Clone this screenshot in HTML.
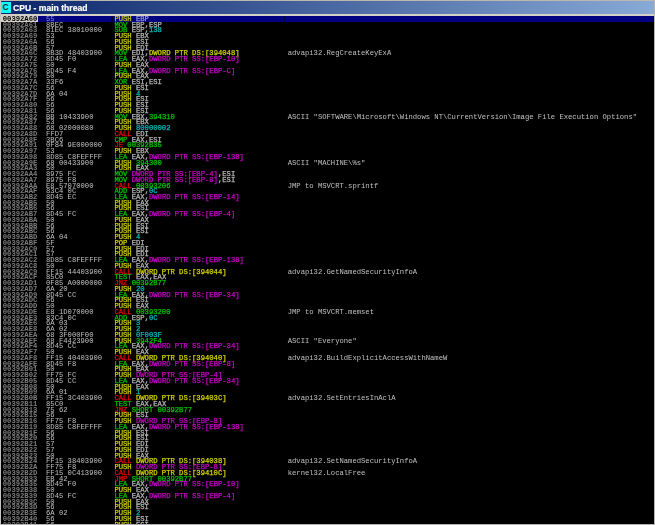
<!DOCTYPE html>
<html><head><meta charset="utf-8"><style>
html,body{margin:0;padding:0;}
body{width:655px;height:525px;position:relative;overflow:hidden;background:#d4d0c8;}
#win{position:absolute;left:0;top:0;width:655px;height:525px;background:#d4d0c8;}
#tb{position:absolute;left:0;top:0;width:655px;height:1px;background:#bcb8b0;}
#bb{position:absolute;left:0;top:523.7px;width:655px;height:1.3px;background:#b4b4b4;}
#lb{position:absolute;left:0;top:0;width:1px;height:525px;background:#c4c4c4;}
#rb{position:absolute;left:654px;top:0;width:1px;height:525px;background:#b4b4b4;}
#title{position:absolute;left:1px;top:1px;width:653px;height:12.8px;background:linear-gradient(to right,#0a246a 0px,#a6caf0 810px);}
#icon{position:absolute;left:1px;top:1.8px;width:10.4px;height:11px;background:#10f8f8;}
#icon span{position:absolute;left:1.6px;top:1.2px;font:bold 8.6px/9px "Liberation Sans",sans-serif;color:#142a2a;}
#ttl{position:absolute;left:12.6px;top:2.6px;font:bold 8.6px "Liberation Sans",sans-serif;color:#fff;white-space:nowrap;line-height:11px;-webkit-text-stroke:0.2px #fff;letter-spacing:0px;will-change:transform;}
#body{position:absolute;left:1px;top:15.8px;width:653px;height:507.9px;background:#000;overflow:hidden;}
#rows{position:absolute;left:0;top:0;width:655px;height:525px;overflow:hidden;will-change:transform;filter:none;clip-path:inset(15.8px 1px 1.3px 1px);}
.row{position:absolute;left:0;width:655px;height:5.747px;font-family:"Liberation Mono",monospace;font-size:7.2px;line-height:5.747px;white-space:pre;letter-spacing:0.0px;font-weight:normal;}
.row span{position:absolute;top:1.05px;}
.row b{font-weight:inherit;}
.a{left:2.75px;color:#7c7c7c;font-weight:bold;}
.h{left:46.0px;color:#c0c0c0;font-weight:normal;}
.dd{left:114.4px;font-weight:normal;-webkit-text-stroke:0.25px;}
.cm{left:287.7px;color:#c0c0c0;font-weight:normal;}
.y{color:#d0d000;} .g{color:#00c400;} .red{color:#f00000;} .r{color:#b8b8b8;}
.c{color:#00b8b8;} .m{color:#c800c8;} .d{color:#d0d000;}
.selbg{position:absolute;top:15.8px;height:5.9px;background:#000080;}
.abox{position:absolute;left:1.2px;top:15.8px;width:37px;height:5.9px;background:#d4d0c8;}
.sel .a{color:#000;}
.sel .r{color:#9a9ae0;} .sel .h{color:#9090e0;}
.sep{position:absolute;top:15.8px;height:5.9px;width:1px;background:#000030;}
</style></head><body>
<div id="win">
<div id="tb"></div><div id="bb"></div><div id="lb"></div><div id="rb"></div>
<div id="title"></div>
<div id="icon"><span>C</span></div>
<div id="ttl">CPU - main thread</div>
<div id="body"></div>
<div class="abox"></div>
<div class="selbg" style="left:38.4px;width:615.6px;background:#000038"></div>
<div class="selbg" style="left:38.4px;width:73.1px"></div>
<div class="selbg" style="left:112.6px;width:171.3px"></div>
<div class="selbg" style="left:284.9px;width:369.1px"></div>
<div id="rows">
<div class="row sel" style="top:15.800px"><span class="a">00392A60</span><span class="h">55</span><span class="dd"><b class="y">PUSH</b> <b class="r">EBP</b></span></div>
<div class="row" style="top:21.547px"><span class="a">00392A61</span><span class="h">8BEC</span><span class="dd"><b class="g">MOV</b> <b class="r">EBP</b><b class="r">,</b><b class="r">ESP</b></span></div>
<div class="row" style="top:27.294px"><span class="a">00392A63</span><span class="h">81EC 38010000</span><span class="dd"><b class="g">SUB</b> <b class="r">ESP</b><b class="r">,</b><b class="c">138</b></span></div>
<div class="row" style="top:33.041px"><span class="a">00392A69</span><span class="h">53</span><span class="dd"><b class="y">PUSH</b> <b class="r">EBX</b></span></div>
<div class="row" style="top:38.788px"><span class="a">00392A6A</span><span class="h">56</span><span class="dd"><b class="y">PUSH</b> <b class="r">ESI</b></span></div>
<div class="row" style="top:44.535px"><span class="a">00392A6B</span><span class="h">57</span><span class="dd"><b class="y">PUSH</b> <b class="r">EDI</b></span></div>
<div class="row" style="top:50.282px"><span class="a">00392A6C</span><span class="h">8B3D 48403900</span><span class="dd"><b class="g">MOV</b> <b class="r">EDI</b><b class="r">,</b><b class="d">DWORD PTR DS:[394048]</b></span><span class="cm">advapi32.RegCreateKeyExA</span></div>
<div class="row" style="top:56.029px"><span class="a">00392A72</span><span class="h">8D45 F0</span><span class="dd"><b class="g">LEA</b> <b class="r">EAX</b><b class="r">,</b><b class="m">DWORD PTR SS:[EBP-10]</b></span></div>
<div class="row" style="top:61.776px"><span class="a">00392A75</span><span class="h">50</span><span class="dd"><b class="y">PUSH</b> <b class="r">EAX</b></span></div>
<div class="row" style="top:67.523px"><span class="a">00392A76</span><span class="h">8D45 F4</span><span class="dd"><b class="g">LEA</b> <b class="r">EAX</b><b class="r">,</b><b class="m">DWORD PTR SS:[EBP-C]</b></span></div>
<div class="row" style="top:73.270px"><span class="a">00392A79</span><span class="h">50</span><span class="dd"><b class="y">PUSH</b> <b class="r">EAX</b></span></div>
<div class="row" style="top:79.017px"><span class="a">00392A7A</span><span class="h">33F6</span><span class="dd"><b class="g">XOR</b> <b class="r">ESI</b><b class="r">,</b><b class="r">ESI</b></span></div>
<div class="row" style="top:84.764px"><span class="a">00392A7C</span><span class="h">56</span><span class="dd"><b class="y">PUSH</b> <b class="r">ESI</b></span></div>
<div class="row" style="top:90.511px"><span class="a">00392A7D</span><span class="h">6A 04</span><span class="dd"><b class="y">PUSH</b> <b class="c">4</b></span></div>
<div class="row" style="top:96.258px"><span class="a">00392A7F</span><span class="h">56</span><span class="dd"><b class="y">PUSH</b> <b class="r">ESI</b></span></div>
<div class="row" style="top:102.005px"><span class="a">00392A80</span><span class="h">56</span><span class="dd"><b class="y">PUSH</b> <b class="r">ESI</b></span></div>
<div class="row" style="top:107.752px"><span class="a">00392A81</span><span class="h">56</span><span class="dd"><b class="y">PUSH</b> <b class="r">ESI</b></span></div>
<div class="row" style="top:113.499px"><span class="a">00392A82</span><span class="h">BB 10433900</span><span class="dd"><b class="g">MOV</b> <b class="r">EBX</b><b class="r">,</b><b class="g">394310</b></span><span class="cm">ASCII &quot;SOFTWARE\Microsoft\Windows NT\CurrentVersion\Image File Execution Options&quot;</span></div>
<div class="row" style="top:119.246px"><span class="a">00392A87</span><span class="h">53</span><span class="dd"><b class="y">PUSH</b> <b class="r">EBX</b></span></div>
<div class="row" style="top:124.993px"><span class="a">00392A88</span><span class="h">68 02000080</span><span class="dd"><b class="y">PUSH</b> <b class="c">80000002</b></span></div>
<div class="row" style="top:130.740px"><span class="a">00392A8D</span><span class="h">FFD7</span><span class="dd"><b class="red">CALL</b> <b class="r">EDI</b></span></div>
<div class="row" style="top:136.487px"><span class="a">00392A8F</span><span class="h">3BC6</span><span class="dd"><b class="g">CMP</b> <b class="r">EAX</b><b class="r">,</b><b class="r">ESI</b></span></div>
<div class="row" style="top:142.234px"><span class="a">00392A91</span><span class="h">0F84 9E000000</span><span class="dd"><b class="red">JE</b> <b class="g">00392B35</b></span></div>
<div class="row" style="top:147.981px"><span class="a">00392A97</span><span class="h">53</span><span class="dd"><b class="y">PUSH</b> <b class="r">EBX</b></span></div>
<div class="row" style="top:153.728px"><span class="a">00392A98</span><span class="h">8D85 C8FEFFFF</span><span class="dd"><b class="g">LEA</b> <b class="r">EAX</b><b class="r">,</b><b class="m">DWORD PTR SS:[EBP-138]</b></span></div>
<div class="row" style="top:159.475px"><span class="a">00392A9E</span><span class="h">68 00433900</span><span class="dd"><b class="y">PUSH</b> <b class="g">394300</b></span><span class="cm">ASCII &quot;MACHINE\%s&quot;</span></div>
<div class="row" style="top:165.222px"><span class="a">00392AA3</span><span class="h">50</span><span class="dd"><b class="y">PUSH</b> <b class="r">EAX</b></span></div>
<div class="row" style="top:170.969px"><span class="a">00392AA4</span><span class="h">8975 FC</span><span class="dd"><b class="g">MOV</b> <b class="m">DWORD PTR SS:[EBP-4]</b><b class="r">,</b><b class="r">ESI</b></span></div>
<div class="row" style="top:176.716px"><span class="a">00392AA7</span><span class="h">8975 F8</span><span class="dd"><b class="g">MOV</b> <b class="m">DWORD PTR SS:[EBP-8]</b><b class="r">,</b><b class="r">ESI</b></span></div>
<div class="row" style="top:182.463px"><span class="a">00392AAA</span><span class="h">E8 57070000</span><span class="dd"><b class="red">CALL</b> <b class="g">00393206</b></span><span class="cm">JMP to MSVCRT.sprintf</span></div>
<div class="row" style="top:188.210px"><span class="a">00392AAF</span><span class="h">83C4 0C</span><span class="dd"><b class="g">ADD</b> <b class="r">ESP</b><b class="r">,</b><b class="c">0C</b></span></div>
<div class="row" style="top:193.957px"><span class="a">00392AB2</span><span class="h">8D45 EC</span><span class="dd"><b class="g">LEA</b> <b class="r">EAX</b><b class="r">,</b><b class="m">DWORD PTR SS:[EBP-14]</b></span></div>
<div class="row" style="top:199.704px"><span class="a">00392AB5</span><span class="h">50</span><span class="dd"><b class="y">PUSH</b> <b class="r">EAX</b></span></div>
<div class="row" style="top:205.451px"><span class="a">00392AB6</span><span class="h">56</span><span class="dd"><b class="y">PUSH</b> <b class="r">ESI</b></span></div>
<div class="row" style="top:211.198px"><span class="a">00392AB7</span><span class="h">8D45 FC</span><span class="dd"><b class="g">LEA</b> <b class="r">EAX</b><b class="r">,</b><b class="m">DWORD PTR SS:[EBP-4]</b></span></div>
<div class="row" style="top:216.945px"><span class="a">00392ABA</span><span class="h">50</span><span class="dd"><b class="y">PUSH</b> <b class="r">EAX</b></span></div>
<div class="row" style="top:222.692px"><span class="a">00392ABB</span><span class="h">56</span><span class="dd"><b class="y">PUSH</b> <b class="r">ESI</b></span></div>
<div class="row" style="top:228.439px"><span class="a">00392ABC</span><span class="h">56</span><span class="dd"><b class="y">PUSH</b> <b class="r">ESI</b></span></div>
<div class="row" style="top:234.186px"><span class="a">00392ABD</span><span class="h">6A 04</span><span class="dd"><b class="y">PUSH</b> <b class="c">4</b></span></div>
<div class="row" style="top:239.933px"><span class="a">00392ABF</span><span class="h">5F</span><span class="dd"><b class="y">POP</b> <b class="r">EDI</b></span></div>
<div class="row" style="top:245.680px"><span class="a">00392AC0</span><span class="h">57</span><span class="dd"><b class="y">PUSH</b> <b class="r">EDI</b></span></div>
<div class="row" style="top:251.427px"><span class="a">00392AC1</span><span class="h">57</span><span class="dd"><b class="y">PUSH</b> <b class="r">EDI</b></span></div>
<div class="row" style="top:257.174px"><span class="a">00392AC2</span><span class="h">8D85 C8FEFFFF</span><span class="dd"><b class="g">LEA</b> <b class="r">EAX</b><b class="r">,</b><b class="m">DWORD PTR SS:[EBP-138]</b></span></div>
<div class="row" style="top:262.921px"><span class="a">00392AC8</span><span class="h">50</span><span class="dd"><b class="y">PUSH</b> <b class="r">EAX</b></span></div>
<div class="row" style="top:268.668px"><span class="a">00392AC9</span><span class="h">FF15 44403900</span><span class="dd"><b class="red">CALL</b> <b class="d">DWORD PTR DS:[394044]</b></span><span class="cm">advapi32.GetNamedSecurityInfoA</span></div>
<div class="row" style="top:274.415px"><span class="a">00392ACF</span><span class="h">85C0</span><span class="dd"><b class="g">TEST</b> <b class="r">EAX</b><b class="r">,</b><b class="r">EAX</b></span></div>
<div class="row" style="top:280.162px"><span class="a">00392AD1</span><span class="h">0F85 A0000000</span><span class="dd"><b class="red">JNZ</b> <b class="g">00392B77</b></span></div>
<div class="row" style="top:285.909px"><span class="a">00392AD7</span><span class="h">6A 20</span><span class="dd"><b class="y">PUSH</b> <b class="c">20</b></span></div>
<div class="row" style="top:291.656px"><span class="a">00392AD9</span><span class="h">8D45 CC</span><span class="dd"><b class="g">LEA</b> <b class="r">EAX</b><b class="r">,</b><b class="m">DWORD PTR SS:[EBP-34]</b></span></div>
<div class="row" style="top:297.403px"><span class="a">00392ADC</span><span class="h">56</span><span class="dd"><b class="y">PUSH</b> <b class="r">ESI</b></span></div>
<div class="row" style="top:303.150px"><span class="a">00392ADD</span><span class="h">50</span><span class="dd"><b class="y">PUSH</b> <b class="r">EAX</b></span></div>
<div class="row" style="top:308.897px"><span class="a">00392ADE</span><span class="h">E8 1D070000</span><span class="dd"><b class="red">CALL</b> <b class="g">00393200</b></span><span class="cm">JMP to MSVCRT.memset</span></div>
<div class="row" style="top:314.644px"><span class="a">00392AE3</span><span class="h">83C4 0C</span><span class="dd"><b class="g">ADD</b> <b class="r">ESP</b><b class="r">,</b><b class="c">0C</b></span></div>
<div class="row" style="top:320.391px"><span class="a">00392AE6</span><span class="h">6A 03</span><span class="dd"><b class="y">PUSH</b> <b class="c">3</b></span></div>
<div class="row" style="top:326.138px"><span class="a">00392AE8</span><span class="h">6A 02</span><span class="dd"><b class="y">PUSH</b> <b class="c">2</b></span></div>
<div class="row" style="top:331.885px"><span class="a">00392AEA</span><span class="h">68 3F000F00</span><span class="dd"><b class="y">PUSH</b> <b class="c">0F003F</b></span></div>
<div class="row" style="top:337.632px"><span class="a">00392AEF</span><span class="h">68 F4423900</span><span class="dd"><b class="y">PUSH</b> <b class="g">3942F4</b></span><span class="cm">ASCII &quot;Everyone&quot;</span></div>
<div class="row" style="top:343.379px"><span class="a">00392AF4</span><span class="h">8D45 CC</span><span class="dd"><b class="g">LEA</b> <b class="r">EAX</b><b class="r">,</b><b class="m">DWORD PTR SS:[EBP-34]</b></span></div>
<div class="row" style="top:349.126px"><span class="a">00392AF7</span><span class="h">50</span><span class="dd"><b class="y">PUSH</b> <b class="r">EAX</b></span></div>
<div class="row" style="top:354.873px"><span class="a">00392AF8</span><span class="h">FF15 40403900</span><span class="dd"><b class="red">CALL</b> <b class="d">DWORD PTR DS:[394040]</b></span><span class="cm">advapi32.BuildExplicitAccessWithNameW</span></div>
<div class="row" style="top:360.620px"><span class="a">00392AFE</span><span class="h">8D45 F8</span><span class="dd"><b class="g">LEA</b> <b class="r">EAX</b><b class="r">,</b><b class="m">DWORD PTR SS:[EBP-8]</b></span></div>
<div class="row" style="top:366.367px"><span class="a">00392B01</span><span class="h">50</span><span class="dd"><b class="y">PUSH</b> <b class="r">EAX</b></span></div>
<div class="row" style="top:372.114px"><span class="a">00392B02</span><span class="h">FF75 FC</span><span class="dd"><b class="y">PUSH</b> <b class="m">DWORD PTR SS:[EBP-4]</b></span></div>
<div class="row" style="top:377.861px"><span class="a">00392B05</span><span class="h">8D45 CC</span><span class="dd"><b class="g">LEA</b> <b class="r">EAX</b><b class="r">,</b><b class="m">DWORD PTR SS:[EBP-34]</b></span></div>
<div class="row" style="top:383.608px"><span class="a">00392B08</span><span class="h">50</span><span class="dd"><b class="y">PUSH</b> <b class="r">EAX</b></span></div>
<div class="row" style="top:389.355px"><span class="a">00392B09</span><span class="h">6A 01</span><span class="dd"><b class="y">PUSH</b> <b class="c">1</b></span></div>
<div class="row" style="top:395.102px"><span class="a">00392B0B</span><span class="h">FF15 3C403900</span><span class="dd"><b class="red">CALL</b> <b class="d">DWORD PTR DS:[39403C]</b></span><span class="cm">advapi32.SetEntriesInAclA</span></div>
<div class="row" style="top:400.849px"><span class="a">00392B11</span><span class="h">85C0</span><span class="dd"><b class="g">TEST</b> <b class="r">EAX</b><b class="r">,</b><b class="r">EAX</b></span></div>
<div class="row" style="top:406.596px"><span class="a">00392B13</span><span class="h">75 62</span><span class="dd"><b class="red">JNZ</b> <b class="g">SHORT 00392B77</b></span></div>
<div class="row" style="top:412.343px"><span class="a">00392B15</span><span class="h">56</span><span class="dd"><b class="y">PUSH</b> <b class="r">ESI</b></span></div>
<div class="row" style="top:418.090px"><span class="a">00392B16</span><span class="h">FF75 F8</span><span class="dd"><b class="y">PUSH</b> <b class="m">DWORD PTR SS:[EBP-8]</b></span></div>
<div class="row" style="top:423.837px"><span class="a">00392B19</span><span class="h">8D85 C8FEFFFF</span><span class="dd"><b class="g">LEA</b> <b class="r">EAX</b><b class="r">,</b><b class="m">DWORD PTR SS:[EBP-138]</b></span></div>
<div class="row" style="top:429.584px"><span class="a">00392B1F</span><span class="h">56</span><span class="dd"><b class="y">PUSH</b> <b class="r">ESI</b></span></div>
<div class="row" style="top:435.331px"><span class="a">00392B20</span><span class="h">56</span><span class="dd"><b class="y">PUSH</b> <b class="r">ESI</b></span></div>
<div class="row" style="top:441.078px"><span class="a">00392B21</span><span class="h">57</span><span class="dd"><b class="y">PUSH</b> <b class="r">EDI</b></span></div>
<div class="row" style="top:446.825px"><span class="a">00392B22</span><span class="h">57</span><span class="dd"><b class="y">PUSH</b> <b class="r">EDI</b></span></div>
<div class="row" style="top:452.572px"><span class="a">00392B23</span><span class="h">50</span><span class="dd"><b class="y">PUSH</b> <b class="r">EAX</b></span></div>
<div class="row" style="top:458.319px"><span class="a">00392B24</span><span class="h">FF15 38403900</span><span class="dd"><b class="red">CALL</b> <b class="d">DWORD PTR DS:[394038]</b></span><span class="cm">advapi32.SetNamedSecurityInfoA</span></div>
<div class="row" style="top:464.066px"><span class="a">00392B2A</span><span class="h">FF75 F8</span><span class="dd"><b class="y">PUSH</b> <b class="m">DWORD PTR SS:[EBP-8]</b></span></div>
<div class="row" style="top:469.813px"><span class="a">00392B2D</span><span class="h">FF15 0C413900</span><span class="dd"><b class="red">CALL</b> <b class="d">DWORD PTR DS:[39410C]</b></span><span class="cm">kernel32.LocalFree</span></div>
<div class="row" style="top:475.560px"><span class="a">00392B33</span><span class="h">EB 42</span><span class="dd"><b class="red">JMP</b> <b class="g">SHORT 00392B77</b></span></div>
<div class="row" style="top:481.307px"><span class="a">00392B35</span><span class="h">8D45 F0</span><span class="dd"><b class="g">LEA</b> <b class="r">EAX</b><b class="r">,</b><b class="m">DWORD PTR SS:[EBP-10]</b></span></div>
<div class="row" style="top:487.054px"><span class="a">00392B38</span><span class="h">50</span><span class="dd"><b class="y">PUSH</b> <b class="r">EAX</b></span></div>
<div class="row" style="top:492.801px"><span class="a">00392B39</span><span class="h">8D45 FC</span><span class="dd"><b class="g">LEA</b> <b class="r">EAX</b><b class="r">,</b><b class="m">DWORD PTR SS:[EBP-4]</b></span></div>
<div class="row" style="top:498.548px"><span class="a">00392B3C</span><span class="h">50</span><span class="dd"><b class="y">PUSH</b> <b class="r">EAX</b></span></div>
<div class="row" style="top:504.295px"><span class="a">00392B3D</span><span class="h">56</span><span class="dd"><b class="y">PUSH</b> <b class="r">ESI</b></span></div>
<div class="row" style="top:510.042px"><span class="a">00392B3E</span><span class="h">6A 02</span><span class="dd"><b class="y">PUSH</b> <b class="c">2</b></span></div>
<div class="row" style="top:515.789px"><span class="a">00392B40</span><span class="h">56</span><span class="dd"><b class="y">PUSH</b> <b class="r">ESI</b></span></div>
<div class="row" style="top:521.536px"><span class="a">00392B41</span><span class="h">56</span><span class="dd"><b class="y">PUSH</b> <b class="r">ESI</b></span></div>
</div>
</div>
</body></html>
